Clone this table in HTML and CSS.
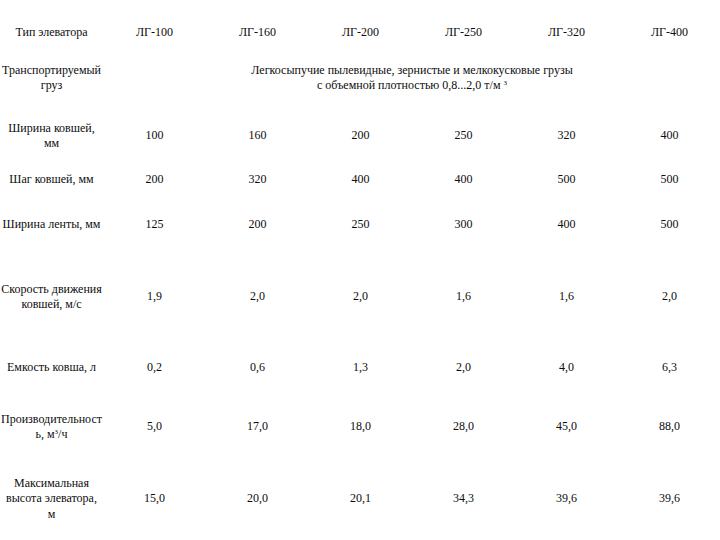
FILE: index.html
```html
<!DOCTYPE html>
<html>
<head>
<meta charset="utf-8">
<link rel="stylesheet" href="styles.css">
</head>
<body>
<div class="table">
  <div class="row r1">
    <div class="cell">Тип элеватора</div>
    <div class="cell">ЛГ-100</div>
    <div class="cell">ЛГ-160</div>
    <div class="cell">ЛГ-200</div>
    <div class="cell">ЛГ-250</div>
    <div class="cell">ЛГ-320</div>
    <div class="cell">ЛГ-400</div>
  </div>
  <div class="row r2">
    <div class="cell">Транспортируемый<br>груз</div>
    <div class="cell span">Легкосыпучие пылевидные, зернистые и мелкокусковые грузы<br>с объемной плотностью 0,8...2,0 т/м <sup>3</sup></div>
  </div>
  <div class="row r3">
    <div class="cell">Ширина ковшей,<br>мм</div>
    <div class="cell">100</div>
    <div class="cell">160</div>
    <div class="cell">200</div>
    <div class="cell">250</div>
    <div class="cell">320</div>
    <div class="cell">400</div>
  </div>
  <div class="row r4">
    <div class="cell">Шаг ковшей, мм</div>
    <div class="cell">200</div>
    <div class="cell">320</div>
    <div class="cell">400</div>
    <div class="cell">400</div>
    <div class="cell">500</div>
    <div class="cell">500</div>
  </div>
  <div class="row r5">
    <div class="cell">Ширина ленты, мм</div>
    <div class="cell">125</div>
    <div class="cell">200</div>
    <div class="cell">250</div>
    <div class="cell">300</div>
    <div class="cell">400</div>
    <div class="cell">500</div>
  </div>
  <div class="row r6">
    <div class="cell">Скорость движения<br>ковшей, м/с</div>
    <div class="cell">1,9</div>
    <div class="cell">2,0</div>
    <div class="cell">2,0</div>
    <div class="cell">1,6</div>
    <div class="cell">1,6</div>
    <div class="cell">2,0</div>
  </div>
  <div class="row r7">
    <div class="cell">Емкость ковша, л</div>
    <div class="cell">0,2</div>
    <div class="cell">0,6</div>
    <div class="cell">1,3</div>
    <div class="cell">2,0</div>
    <div class="cell">4,0</div>
    <div class="cell">6,3</div>
  </div>
  <div class="row r8">
    <div class="cell">Производительност<br>ь, м<sup>3</sup>/ч</div>
    <div class="cell">5,0</div>
    <div class="cell">17,0</div>
    <div class="cell">18,0</div>
    <div class="cell">28,0</div>
    <div class="cell">45,0</div>
    <div class="cell">88,0</div>
  </div>
  <div class="row r9">
    <div class="cell">Максимальная<br>высота элеватора,<br>м</div>
    <div class="cell">15,0</div>
    <div class="cell">20,0</div>
    <div class="cell">20,1</div>
    <div class="cell">34,3</div>
    <div class="cell">39,6</div>
    <div class="cell">39,6</div>
  </div>
</div>
</body>
</html>
```
FILE: styles.css
```css
html, body {
  margin: 0;
  padding: 0;
  overflow: hidden;
  background: #ffffff;
}
body {
  width: 720px;
  height: 540px;
  font-family: "Liberation Serif", "Times New Roman", serif;
  font-size: 12px;
  color: #0d0d0d;
}
.table {
  padding-top: 10px;
  display: flex;
  flex-direction: column;
}
.row {
  display: grid;
  grid-template-columns: repeat(7, 103px);
  align-items: center;
}
.cell {
  text-align: center;
  line-height: 15.5px;
  white-space: nowrap;
}
.span {
  grid-column: 2 / 8;
}
sup {
  font-size: 7px;
  line-height: 0;
  vertical-align: 4px;
}
.r1 { height: 46px; }
.r2 { height: 44px; }
.r3 { height: 72px; }
.r4 { height: 16px; }
.r5 { height: 74px; }
.r6 { height: 70px; }
.r7 { height: 72px; }
.r8 { height: 46px; }
.r9 { height: 98px; }
```
